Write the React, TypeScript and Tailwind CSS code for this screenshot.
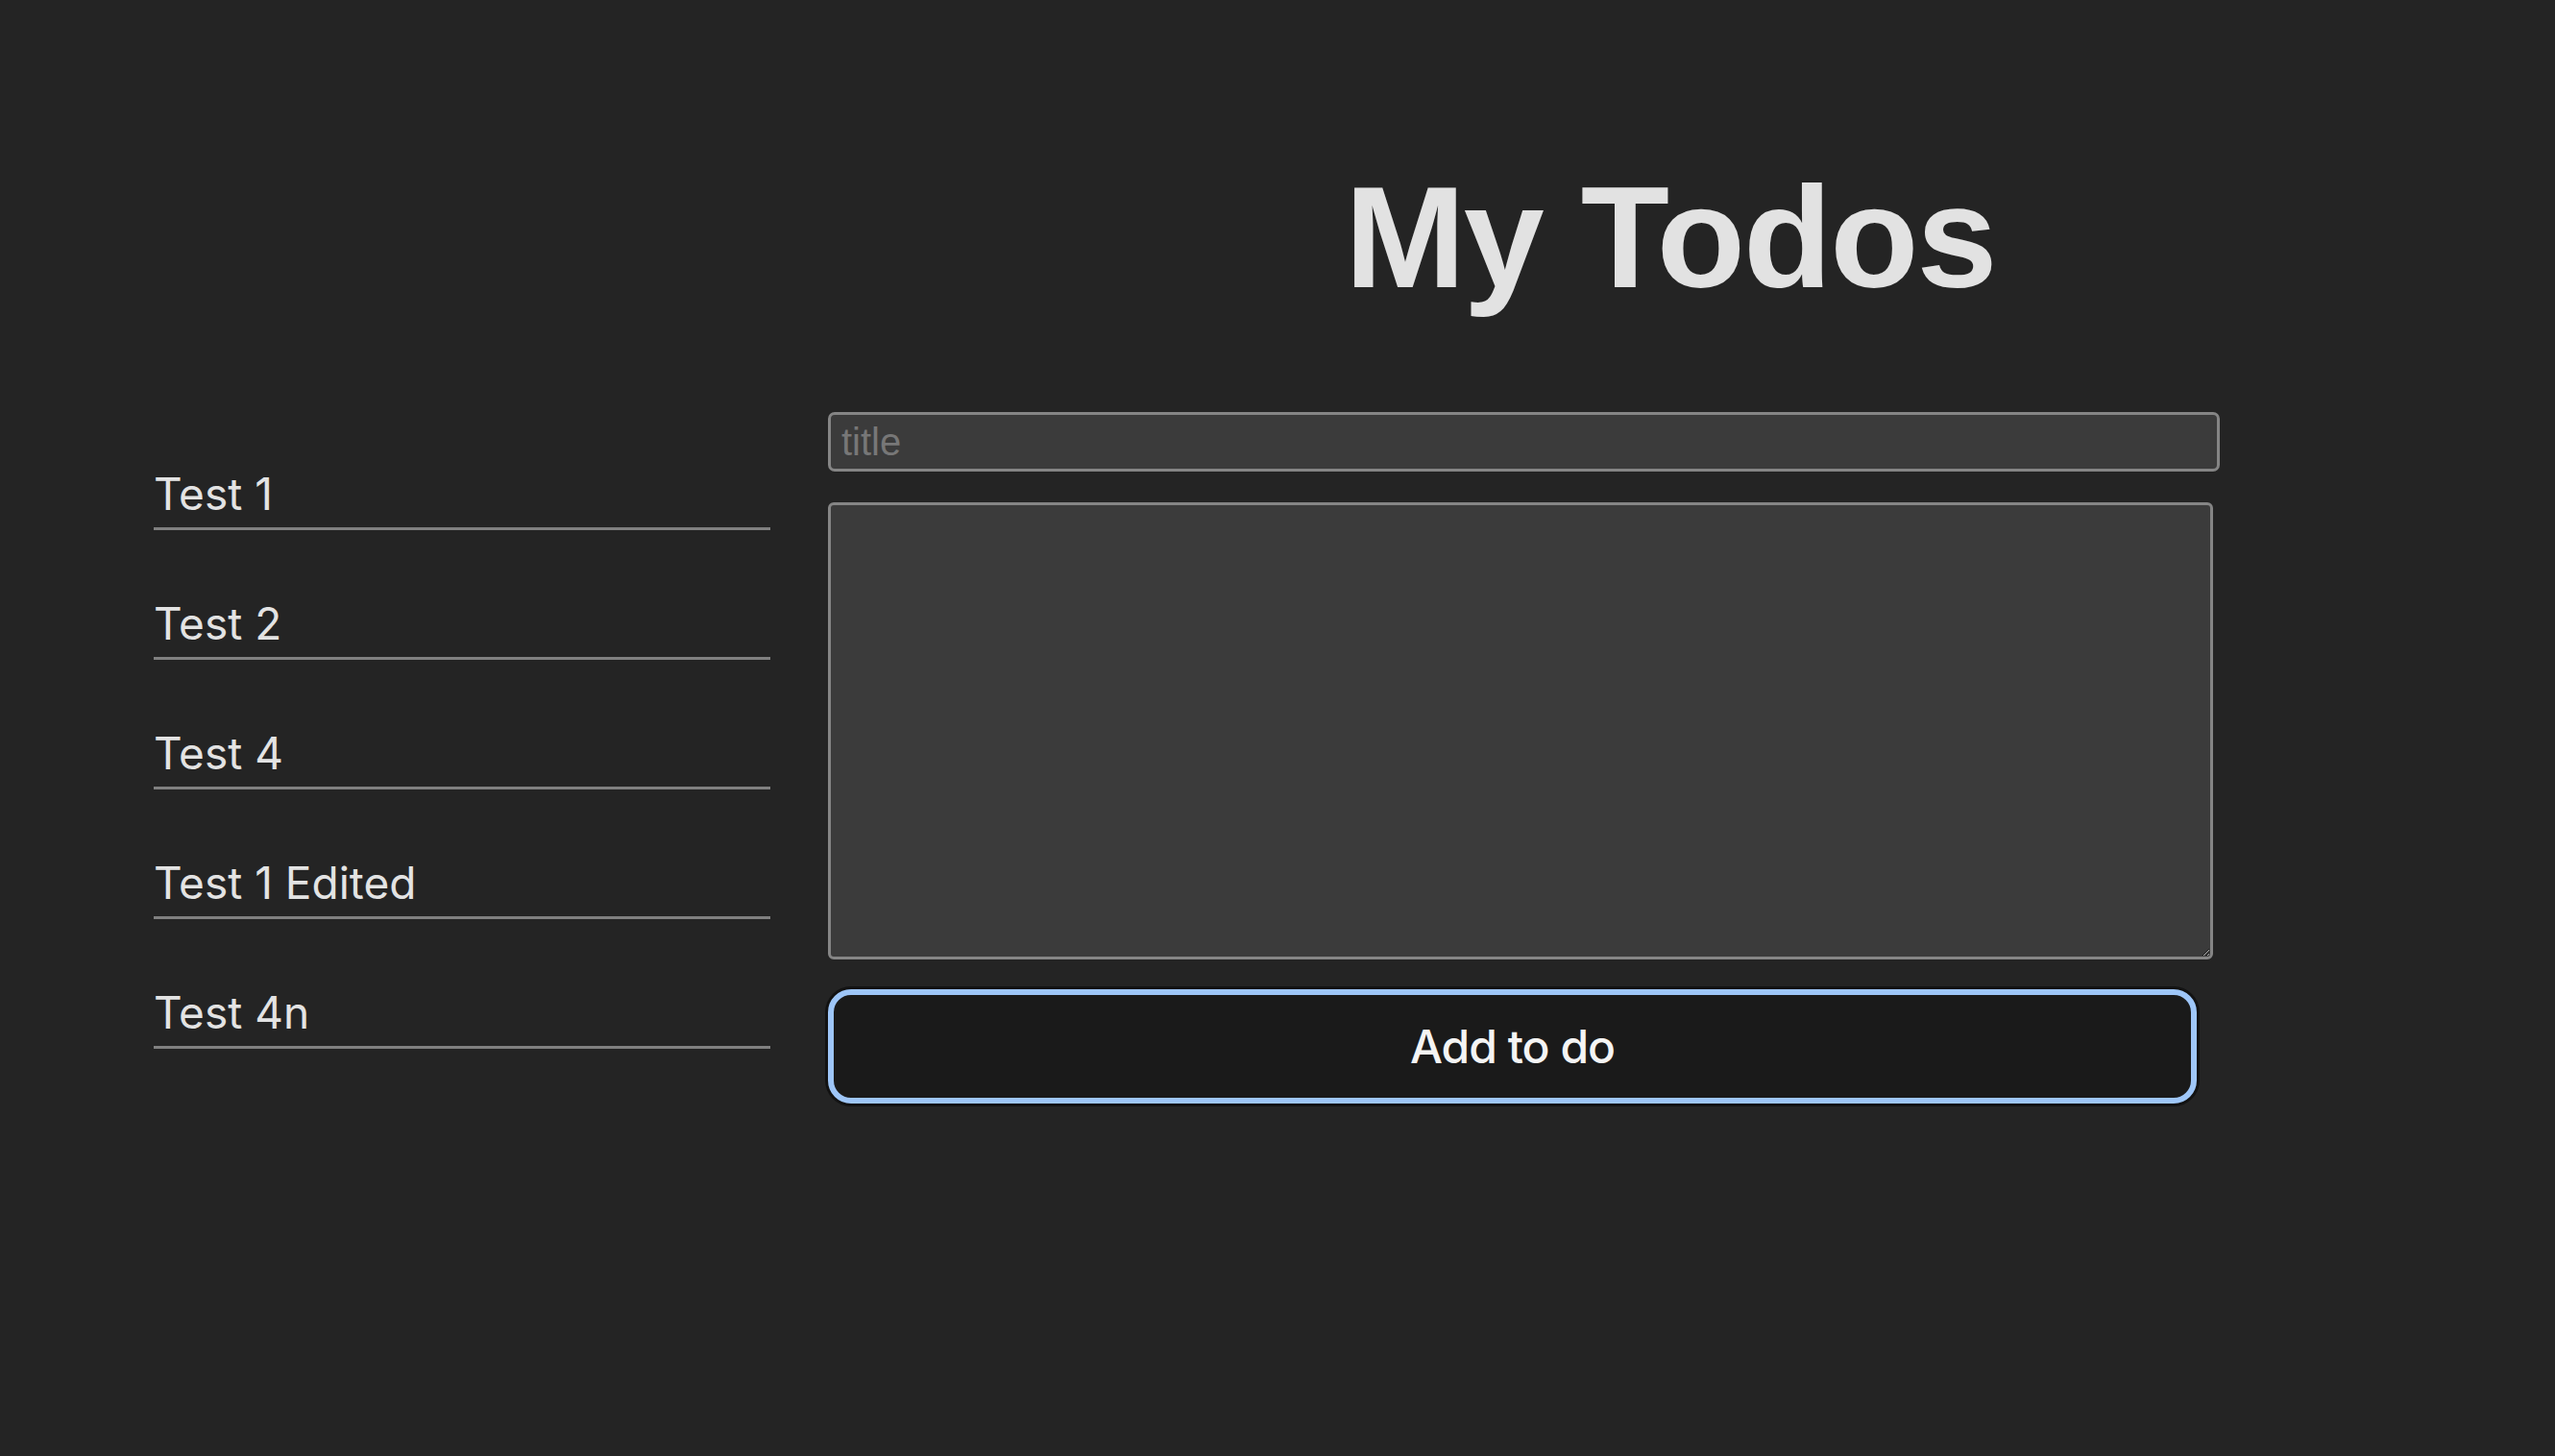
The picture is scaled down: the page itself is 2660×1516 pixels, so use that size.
const todos = ['Test 1', 'Test 2', 'Test 4', 'Test 1 Edited', 'Test 4n'];

export default function App() {
  return (
    <div className="min-h-screen w-full bg-[#242424] text-[#e3e3e3] font-['Inter',sans-serif]">
      <h1 className="pt-[171px] pl-[1400px] text-[151px] leading-none font-bold tracking-[-2px] text-[#e2e2e2] font-['Liberation_Sans',Arial,sans-serif] whitespace-nowrap">
        My Todos
      </h1>

      <div className="flex items-start mt-[107px]">
        {/* todo list */}
        <ul className="ml-[160px] w-[642px] pt-[57px] flex flex-col gap-[69px]">
          {todos.map((t) => (
            <li
              key={t}
              className="h-[66px] pb-[7px] border-b-[3px] border-[#808080] text-[46px] leading-[56px] text-[#e3e3e3]"
            >
              {t}
            </li>
          ))}
        </ul>

        {/* form */}
        <div className="ml-[60px] flex flex-col">
          <input
            placeholder="title"
            className="w-[1449px] h-[62px] px-[11px] bg-[#3b3b3b] border-[3px] border-[#858585] rounded-[7px] text-[40px] text-[#e3e3e3] placeholder:text-[#777777] font-['Liberation_Sans',Arial,sans-serif] outline-none"
          />
          <textarea className="mt-[32px] w-[1442px] h-[476px] bg-[#3b3b3b] border-[3px] border-[#858585] rounded-[6px] text-[40px] text-[#e3e3e3] outline-none" />
          <button className="mt-[31px] w-[1425px] h-[119px] bg-[#1a1a1a] border-[6px] border-[#9ec6f8] rounded-[24px] shadow-[0_0_0_3px_#121212] text-[48px] font-medium tracking-[-1px] text-[#f4f4f4]">
            Add to do
          </button>
        </div>
      </div>
    </div>
  );
}
